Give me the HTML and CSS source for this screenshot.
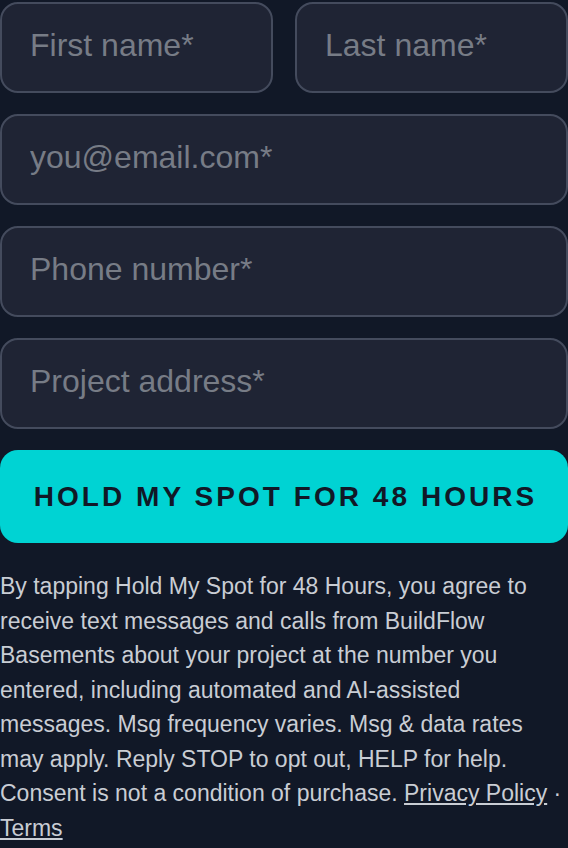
FILE: index.html
```html
<!DOCTYPE html>
<html lang="en">
<head>
<meta charset="utf-8">
<title>Hold my spot</title>
<link rel="stylesheet" href="styles.css">
</head>
<body>
<form class="form">
  <div class="row">
    <input class="field" type="text" placeholder="First name*">
    <input class="field" type="text" placeholder="Last name*">
  </div>
  <input class="field" type="email" placeholder="you@email.com*">
  <input class="field" type="tel" placeholder="Phone number*">
  <input class="field" type="text" placeholder="Project address*">
  <button class="cta" type="button">HOLD MY SPOT FOR 48 HOURS</button>
</form>
<p class="consent">By tapping Hold My Spot for 48 Hours, you agree to receive text messages and calls from BuildFlow Basements about your project at the number you entered, including automated and AI-assisted messages. Msg frequency varies. Msg &amp; data rates may apply. Reply STOP to opt out, HELP for help. Consent is not a condition of purchase. <a href="#">Privacy Policy</a> · <a href="#">Terms</a></p>
</body>
</html>
```
FILE: styles.css
```css
html, body {
  margin: 0;
  padding: 0;
  background: #111827;
}
body {
  padding-top: 2px;
  font-family: "Liberation Sans", Arial, sans-serif;
}
.form {
  display: flex;
  flex-direction: column;
  gap: 21px;
}
.row {
  display: grid;
  grid-template-columns: 1fr 1fr;
  gap: 22px;
}
.field {
  box-sizing: border-box;
  width: 100%;
  height: 91px;
  margin: 0;
  padding: 0 28px 5px;
  background: #1f2434;
  border: 2px solid #444b5d;
  border-radius: 18px;
  font-family: "Liberation Sans", Arial, sans-serif;
  font-size: 32px;
  color: #e5e7eb;
  outline: none;
}
.field::placeholder {
  color: #777c86;
}
.cta {
  box-sizing: border-box;
  width: 100%;
  height: 93px;
  margin: 0;
  border: none;
  border-radius: 18px;
  background: #00d3d3;
  color: #111827;
  font-family: "Liberation Sans", Arial, sans-serif;
  font-weight: 700;
  font-size: 28px;
  letter-spacing: 3.05px;
  padding: 0 0 0 3px;
}
.consent {
  margin: 26px 0 0;
  font-size: 23px;
  line-height: 34.5px;
  color: #c9cdd4;
}
.consent a {
  color: #c9cdd4;
  text-decoration: underline;
}
```
